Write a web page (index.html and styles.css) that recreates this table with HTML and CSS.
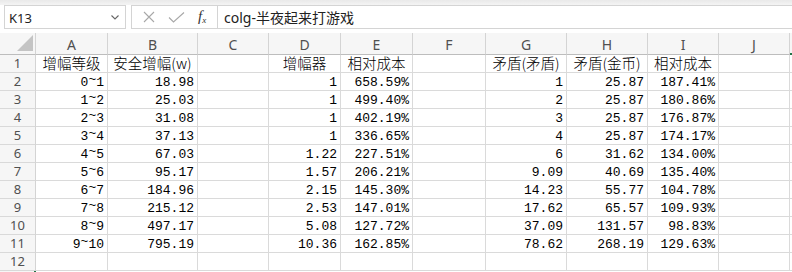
FILE: index.html
```html
<!DOCTYPE html>
<html lang="zh">
<head>
<meta charset="utf-8">
<link rel="stylesheet" href="styles.css">
</head>
<body>
<div class="app">
  <div class="topstrip"></div>
  <div class="fbar">
    <div class="namebox">
      <span class="nb-text">K13</span>
      <svg class="chev" width="8" height="5" viewBox="0 0 8 5"><path d="M0.5 0.5 L4 4 L7.5 0.5" fill="none" stroke="#666" stroke-width="1.1"/></svg>
    </div>
    <div class="grip"></div>
    <div class="formula">
      <div class="fbtns">
        <svg width="12" height="12" viewBox="0 0 12 12"><path d="M1 1 L11 11 M11 1 L1 11" stroke="#a8a8a8" stroke-width="1.1" fill="none"/></svg>
        <svg width="17" height="11" viewBox="0 0 17 11"><path d="M1 5.5 L5.5 10 L16 0.5" stroke="#a8a8a8" stroke-width="1.1" fill="none"/></svg>
        <span class="fx"><i>f</i><sub>x</sub></span>
      </div>
      <div class="finput">colg-半夜起来打游戏</div>
    </div>
  </div>
  <div class="sheet">
    <div class="corner"><svg width="16" height="16" viewBox="0 0 16 16"><path d="M16 0 L16 16 L0 16 Z" fill="#c4c4c4"/></svg></div>
    <div class="ch">A</div><div class="ch">B</div><div class="ch">C</div><div class="ch">D</div><div class="ch">E</div><div class="ch">F</div><div class="ch">G</div><div class="ch">H</div><div class="ch">I</div><div class="ch">J</div><div class="ch chk"></div>

    <div class="rh">1</div>
    <div class="c hd">增幅等级</div><div class="c hd">安全增幅(w)</div><div class="c"></div><div class="c hd">增幅器</div><div class="c hd">相对成本</div><div class="c"></div><div class="c hd">矛盾(矛盾)</div><div class="c hd">矛盾(金币)</div><div class="c hd">相对成本</div><div class="c"></div><div class="c"></div>

    <div class="rh">2</div>
    <div class="c">0<span class="t">~</span>1</div><div class="c">18.98</div><div class="c"></div><div class="c">1</div><div class="c">658.59%</div><div class="c"></div><div class="c">1</div><div class="c">25.87</div><div class="c">187.41%</div><div class="c"></div><div class="c"></div>

    <div class="rh">3</div>
    <div class="c">1<span class="t">~</span>2</div><div class="c">25.03</div><div class="c"></div><div class="c">1</div><div class="c">499.40%</div><div class="c"></div><div class="c">2</div><div class="c">25.87</div><div class="c">180.86%</div><div class="c"></div><div class="c"></div>

    <div class="rh">4</div>
    <div class="c">2<span class="t">~</span>3</div><div class="c">31.08</div><div class="c"></div><div class="c">1</div><div class="c">402.19%</div><div class="c"></div><div class="c">3</div><div class="c">25.87</div><div class="c">176.87%</div><div class="c"></div><div class="c"></div>

    <div class="rh">5</div>
    <div class="c">3<span class="t">~</span>4</div><div class="c">37.13</div><div class="c"></div><div class="c">1</div><div class="c">336.65%</div><div class="c"></div><div class="c">4</div><div class="c">25.87</div><div class="c">174.17%</div><div class="c"></div><div class="c"></div>

    <div class="rh">6</div>
    <div class="c">4<span class="t">~</span>5</div><div class="c">67.03</div><div class="c"></div><div class="c">1.22</div><div class="c">227.51%</div><div class="c"></div><div class="c">6</div><div class="c">31.62</div><div class="c">134.00%</div><div class="c"></div><div class="c"></div>

    <div class="rh">7</div>
    <div class="c">5<span class="t">~</span>6</div><div class="c">95.17</div><div class="c"></div><div class="c">1.57</div><div class="c">206.21%</div><div class="c"></div><div class="c">9.09</div><div class="c">40.69</div><div class="c">135.40%</div><div class="c"></div><div class="c"></div>

    <div class="rh">8</div>
    <div class="c">6<span class="t">~</span>7</div><div class="c">184.96</div><div class="c"></div><div class="c">2.15</div><div class="c">145.30%</div><div class="c"></div><div class="c">14.23</div><div class="c">55.77</div><div class="c">104.78%</div><div class="c"></div><div class="c"></div>

    <div class="rh">9</div>
    <div class="c">7<span class="t">~</span>8</div><div class="c">215.12</div><div class="c"></div><div class="c">2.53</div><div class="c">147.01%</div><div class="c"></div><div class="c">17.62</div><div class="c">65.57</div><div class="c">109.93%</div><div class="c"></div><div class="c"></div>

    <div class="rh">10</div>
    <div class="c">8<span class="t">~</span>9</div><div class="c">497.17</div><div class="c"></div><div class="c">5.08</div><div class="c">127.72%</div><div class="c"></div><div class="c">37.09</div><div class="c">131.57</div><div class="c">98.83%</div><div class="c"></div><div class="c"></div>

    <div class="rh">11</div>
    <div class="c">9<span class="t">~</span>10</div><div class="c">795.19</div><div class="c"></div><div class="c">10.36</div><div class="c">162.85%</div><div class="c"></div><div class="c">78.62</div><div class="c">268.19</div><div class="c">129.63%</div><div class="c"></div><div class="c"></div>

    <div class="rh">12</div>
    <div class="c"></div><div class="c"></div><div class="c"></div><div class="c"></div><div class="c"></div><div class="c"></div><div class="c"></div><div class="c"></div><div class="c"></div><div class="c"></div><div class="c"></div>

    <div class="rh rhk"></div>
  </div>
</div>
</body>
</html>
```

FILE: styles.css
```css
* { box-sizing: border-box; }
html, body { margin: 0; padding: 0; background: #fff; }
body { width: 792px; height: 272px; overflow: hidden; }

.app { width: 792px; height: 272px; overflow: hidden; display: flex; flex-direction: column; }

.topstrip { height: 5px; background: linear-gradient(#e9e9e9, #f4f4f4); flex: none; }

.fbar {
  height: 28px;
  flex: none;
  display: flex;
  align-items: flex-start;
  padding: 0 0 0 4px;
  background: #fff;
}

.namebox {
  width: 122px;
  height: 24px;
  border: 1px solid #d4d4d4;
  display: flex;
  align-items: center;
  justify-content: space-between;
  padding: 0 4px 0 4px;
  font-family: "Noto Sans", "Open Sans", sans-serif;
  font-size: 13px;
  color: #222;
}
.nb-text { padding-top: 1px; }
.chev { margin-right: 2px; }

.grip { width: 5px; }

.formula {
  flex: 1;
  height: 24px;
  border: 1px solid #d4d4d4;
  border-right: none;
  display: flex;
  align-items: stretch;
}

.fbtns {
  width: 86px;
  display: flex;
  align-items: center;
  padding-left: 11px;
  gap: 13px;
  border-right: 1px solid #d4d4d4;
}
.fx {
  font-family: "Liberation Serif", "DejaVu Serif", serif;
  font-size: 15px;
  color: #333;
  line-height: 1;
}
.fx i { font-style: italic; }
.fx sub { font-size: 9px; font-style: italic; vertical-align: -2px; }

.finput {
  display: flex;
  align-items: center;
  padding-left: 6px;
  font-family: "Noto Sans", "Noto Sans CJK SC", sans-serif;
  font-size: 14px;
  color: #222;
}

.sheet {
  flex: none;
  display: grid;
  grid-template-columns: 36px 72px 90px 71px 72px 72px 73px 81px 81px 71px 71px 20px;
  grid-template-rows: 22px repeat(12, 18px) 18px;
  width: 810px;
}

.corner {
  border-right: 1px solid #d4d4d4;
  border-bottom: 1px solid #bdbdbd;
  display: flex;
  align-items: flex-end;
  justify-content: flex-end;
  padding: 0 2px 3px 0;
  background: #f6f6f6;
}

.ch {
  border-right: 1px solid #d4d4d4;
  border-bottom: 1px solid #bdbdbd;
  background: #f6f6f6;
  font-family: "Noto Sans", "Open Sans", sans-serif;
  font-size: 14px;
  color: #505050;
  display: flex;
  align-items: center;
  justify-content: center;
  padding-top: 1px;
}
.chk { border-bottom: 2px solid #217346; }

.rh {
  border-right: 1px solid #d4d4d4;
  border-bottom: 1px solid #d9d9d9;
  background: #f6f6f6;
  font-family: "Noto Sans", "Open Sans", sans-serif;
  font-size: 13px;
  color: #505050;
  display: flex;
  align-items: center;
  justify-content: center;
  line-height: 1;
}
.rhk { border-right: 2px solid #217346; }

.c {
  border-right: 1px solid #dadada;
  border-bottom: 1px solid #dadada;
  font-family: "Liberation Mono", "Noto Sans CJK SC", monospace;
  font-size: 13px;
  line-height: 15px;
  color: #000;
  display: block;
  text-align: right;
  padding: 2px 3px 0 0;
  white-space: nowrap;
}
.c.hd {
  text-align: center;
  padding: 0;
  font-family: "Noto Sans CJK SC", sans-serif;
  font-weight: 300;
  font-size: 14.5px;
  line-height: 16px;
}
.t { vertical-align: 3px; line-height: 0; }
```
